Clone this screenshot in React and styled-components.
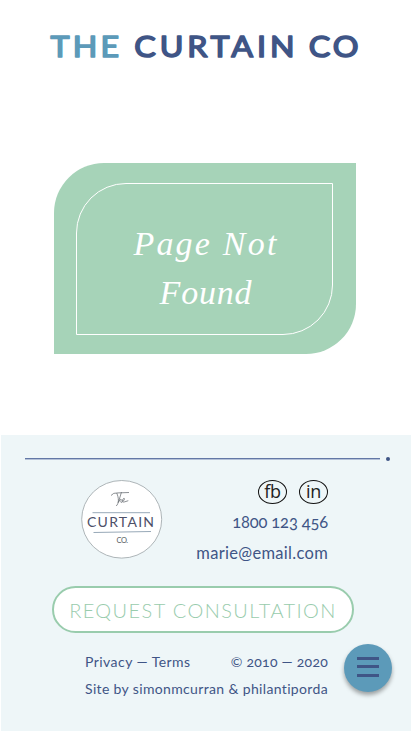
import React from "react";
import styled, { createGlobalStyle } from "styled-components";

const navy = "#3f5586";
const teal = "#5c9ab9";
const mint = "#a6d3b8";

const GlobalStyle = createGlobalStyle`
  * { box-sizing: border-box; }
  html, body { margin: 0; padding: 0; background: #fff; overflow: hidden; }
  a { color: inherit; text-decoration: none; }
`;

const Page = styled.div`
  width: 411px;
  height: 731px;
  display: flex;
  flex-direction: column;
  font-family: Lato, sans-serif;
  color: ${navy};
`;

const Header = styled.header`
  height: 163px;
  padding-top: 24px;
`;

const Wordmark = styled.svg`
  display: block;
  width: 411px;
  height: 46px;
  font-family: Lato, sans-serif;
  font-weight: 400;
  font-size: 29.5px;
  stroke-width: 1.6px;
  stroke-linejoin: round;
`;

const Main = styled.main`
  height: 272px;
  padding-left: 54px;
`;

const Plaque = styled.section`
  width: 302px;
  height: 190.5px;
  padding: 19.5px 23px 18px 22px;
  background: ${mint};
  border-radius: 50px 0 50px 0;
`;

const PlaqueFrame = styled.div`
  height: 152px;
  padding: 35px 0 0 3px;
  border: 1px solid #fff;
  border-radius: 50px 0 50px 0;
`;

const Title = styled.h1`
  margin: 0;
  color: #fff;
  text-align: center;
  font: italic 400 34px/49px "Liberation Serif", serif;
`;

const TitleLine = styled.span`
  display: block;
  letter-spacing: ${(p) => p.$tracking};
`;

const Footer = styled.footer`
  height: 296px;
  margin-left: 1px;
  padding-top: 22px;
  background: #eef6f8;
`;

const Rule = styled.div`
  display: flex;
  align-items: center;
  gap: 6px;
  height: 4px;
  padding-left: 24px;

  &::before {
    content: "";
    width: 355px;
    height: 2px;
    background: linear-gradient(#6378a6 50%, #b4c1d8 50%);
  }
  &::after {
    content: "";
    width: 4px;
    height: 4px;
    margin-left: -0.5px;
    border-radius: 50%;
    background: ${navy};
  }
`;

const Contact = styled.div`
  display: flex;
  justify-content: space-between;
  width: 248px;
  height: 125px;
  margin-left: 79px;
  padding-top: 18px;
`;

const Badge = styled.svg`
  width: 84px;
  height: 82px;
`;

const ContactList = styled.div`
  display: flex;
  flex-direction: column;
  align-items: flex-end;
  padding-top: 1px;
`;

const Socials = styled.div`
  display: flex;
  gap: 12px;
`;

const Social = styled.a`
  width: 29px;
  height: 24px;
  border: 1.4px solid #111;
  border-radius: 50%;
  color: #222;
  text-align: center;
  font: 400 18px/21px "Open Sans", sans-serif;
  letter-spacing: -0.3px;
`;

const ContactLink = styled.a`
  height: 31px;
  margin-top: ${(p) => p.$top || "0"};
  font-size: 16.5px;
  line-height: 31px;
  white-space: nowrap;
  font-variant-numeric: oldstyle-nums;
  letter-spacing: ${(p) => p.$tracking};
`;

const RequestButton = styled.button`
  display: block;
  width: 302px;
  height: 47px;
  margin-left: 51px;
  padding: 0;
  border: 2px solid #99ccad;
  border-radius: 24px;
  background: #fff;
  color: #99ccad;
  font: 300 20px/40px Lato, sans-serif;
  letter-spacing: 1.4px;
  white-space: nowrap;
`;

const Legal = styled.div`
  width: 243px;
  margin: 15px 0 0 84px;
  font-size: 14px;
  line-height: 27px;
`;

const LegalRow = styled.div`
  display: flex;
  justify-content: space-between;
  white-space: nowrap;
  font-variant-numeric: oldstyle-nums;
`;

const LegalText = styled.span`
  letter-spacing: ${(p) => p.$tracking || "0"};
`;

const MenuButton = styled.button`
  position: fixed;
  left: 344px;
  top: 644px;
  width: 48px;
  height: 48px;
  display: flex;
  flex-direction: column;
  align-items: center;
  gap: 5.4px;
  padding: 13px 0 0;
  border: 0;
  border-radius: 50%;
  background: ${teal};
  box-shadow: 0 3px 4px rgba(0, 0, 0, 0.35);
`;

const MenuBar = styled.span`
  width: 22px;
  height: 3px;
  flex: none;
  background: ${navy};
`;

export default function App() {
  return (
    <Page>
      <GlobalStyle />
      <Header>
        <Wordmark role="img" aria-label="The Curtain Co">
          <g transform="scale(1.09 1)">
            <text x="46.300" y="33.500" textLength="63" fill={teal} stroke={teal}>THE</text>
            <text x="123.200" y="33.500" textLength="147" fill={navy} stroke={navy}>CURTAIN</text>
            <text x="283.300" y="33.500" textLength="45.500" fill={navy} stroke={navy}>CO</text>
          </g>
        </Wordmark>
      </Header>
      <Main>
        <Plaque>
          <PlaqueFrame>
            <Title>
              <TitleLine $tracking="2.2px">Page Not</TitleLine>
              <TitleLine $tracking="0.8px">Found</TitleLine>
            </Title>
          </PlaqueFrame>
        </Plaque>
      </Main>
      <Footer>
        <Rule />
        <Contact>
          <Badge viewBox="80 479 84 82" role="img" aria-label="The Curtain Co. logo">
            <ellipse cx="121.7" cy="519.3" rx="40" ry="38.8" fill="#fff" stroke="#a5adb0" strokeWidth=".9" />
            <g fill="none" stroke="#666b70" strokeWidth=".75">
              <path d="M111 495.5q2-3 7-2.6l11-.4M116.7 493c2.3 5 2.3 10.500-.5 13M121.500 492l-3.200 10.500c1.800-3.600 3.400-5 2.600-1.300-.3 1.500.4 1.600 1.300.7 2-1 3-4 1.600-3.500-2 1-1.900 4.800 1 3.400l3.500-1.100" />
            </g>
            <path d="M92.500 512.700H150M93.500 532.500L151 531.500" stroke="#98a9b8" strokeWidth="1" />
            <text x="87" y="526.500" textLength="67" fontFamily="Lato, sans-serif" fontSize="14" fill="#4d5068">CURTAIN</text>
            <text x="116.500" y="542.800" textLength="11.500" fontFamily="Lato, sans-serif" fontSize="7.500" fill="#555a60">CO.</text>
          </Badge>
          <ContactList>
            <Socials>
              <Social href="#">fb</Social>
              <Social href="#">in</Social>
            </Socials>
            <ContactLink href="#" $top="3px" $tracking="-0.15px">1800 123 456</ContactLink>
            <ContactLink href="#" $tracking="0.3px">marie@email.com</ContactLink>
          </ContactList>
        </Contact>
        <RequestButton>REQUEST CONSULTATION</RequestButton>
        <Legal>
          <LegalRow>
            <LegalText as="a" href="#" $tracking="0.45px">Privacy — Terms</LegalText>
            <LegalText $tracking="0.25px">© 2010 — 2020</LegalText>
          </LegalRow>
          <LegalRow>
            <LegalText $tracking="0.35px">Site by simonmcurran &amp; philantiporda</LegalText>
          </LegalRow>
        </Legal>
      </Footer>
      <MenuButton aria-label="Menu">
        <MenuBar />
        <MenuBar />
        <MenuBar />
      </MenuButton>
    </Page>
  );
}
